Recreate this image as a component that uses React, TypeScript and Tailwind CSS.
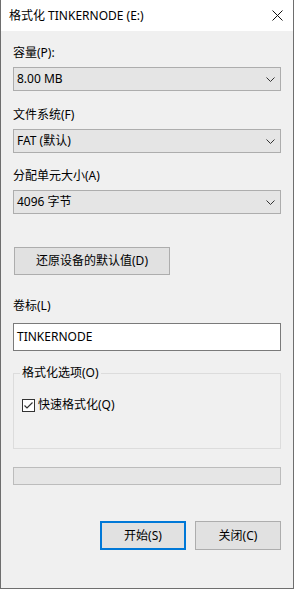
import React from "react";

const font = { fontFamily: '"Noto Sans", "Noto Sans CJK SC", sans-serif' };

function Chevron() {
  return (
    <svg width="9" height="5" viewBox="0 0 9 5" className="shrink-0">
      <path d="M0.5 0.5 L4.5 4.5 L8.5 0.5" fill="none" stroke="#333" strokeWidth="1" />
    </svg>
  );
}

function Combo({ value }: { value: string }) {
  return (
    <div className="mt-[6px] flex h-[24px] items-center justify-between border border-[#adadad] bg-[#e5e5e5] pl-[3px] pr-[5px] text-[12px] leading-[16px] text-black">
      <span>{value}</span>
      <Chevron />
    </div>
  );
}

export default function App() {
  return (
    <div
      className="flex h-[589px] w-[294px] flex-col border-x border-b border-[#6e6e6e] bg-[#f0f0f0] text-black"
      style={font}
    >
      {/* title bar */}
      <div className="flex h-[31px] shrink-0 items-center justify-between bg-white pl-[8px] pr-[10px]">
        <span className="text-[12px] leading-[16px]">格式化 TINKERNODE (E:)</span>
        <svg width="11" height="11" viewBox="0 0 11 11">
          <path d="M0.5 0.5 L10.5 10.5 M10.5 0.5 L0.5 10.5" stroke="#111" strokeWidth="1" />
        </svg>
      </div>

      <div className="flex flex-col px-[12px]">
        <div className="mt-[14px] h-[16px] text-[12px] leading-[16px]">容量(P):</div>
        <Combo value="8.00 MB" />

        <div className="mt-[16px] h-[16px] text-[12px] leading-[16px]">文件系统(F)</div>
        <Combo value="FAT (默认)" />

        <div className="mt-[15px] h-[16px] text-[12px] leading-[16px]">分配单元大小(A)</div>
        <Combo value="4096 字节" />

        <button className="ml-px mt-[33px] flex h-[28px] w-[156px] items-center justify-center border border-[#adadad] bg-[#e1e1e1] text-[12px] leading-[16px]">
          还原设备的默认值(D)
        </button>

        <div className="mt-[23px] h-[16px] text-[12px] leading-[16px]">卷标(L)</div>
        <div className="mt-[9px] flex h-[28px] items-center border border-[#7a7a7a] bg-white pl-[3px] text-[12px] leading-[16px]">
          TINKERNODE
        </div>

        {/* group box */}
        <div className="relative mt-[22px] h-[76px] border border-[#dcdcdc]">
          <span className="absolute left-[6px] top-[-9px] bg-[#f0f0f0] px-[2px] text-[12px] leading-[16px]">
            格式化选项(O)
          </span>
          <div className="ml-[8px] mt-[23px] flex items-center gap-[3px]">
            <div className="flex h-[13px] w-[13px] items-center justify-center border border-[#333] bg-white">
              <svg width="11" height="11" viewBox="0 0 11 11">
                <path d="M1.5 5.5 L4 8 L9.5 2.5" fill="none" stroke="#333" strokeWidth="1.2" />
              </svg>
            </div>
            <span className="text-[12px] leading-[16px]">快速格式化(Q)</span>
          </div>
        </div>

        {/* progress bar */}
        <div className="mt-[18px] h-[18px] border border-[#bcbcbc] bg-[#e6e6e6]" />

        <div className="mt-[36px] flex justify-end gap-[9px]">
          <button className="flex h-[29px] w-[86px] items-center justify-center border-2 border-[#0078d7] bg-[#e1e1e1] text-[12px] leading-[16px]">
            开始(S)
          </button>
          <button className="flex h-[29px] w-[86px] items-center justify-center border border-[#adadad] bg-[#e1e1e1] text-[12px] leading-[16px]">
            关闭(C)
          </button>
        </div>
      </div>
    </div>
  );
}
